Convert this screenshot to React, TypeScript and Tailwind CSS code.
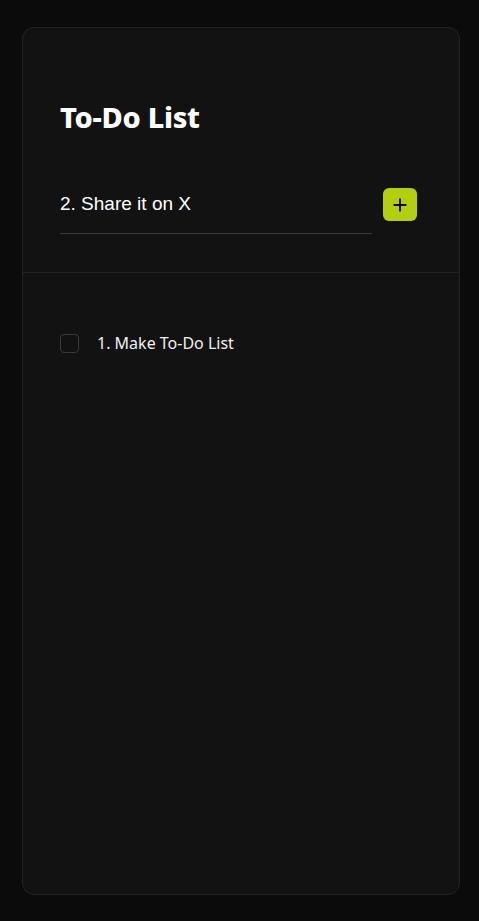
import React from "react";

export default function App() {
  return (
    <div className="min-h-screen bg-[#0b0b0b] pt-[27px] pl-[22px] pr-[19px] pb-[26px]">
      <div className="h-[868px] rounded-[12px] border border-[#232323] bg-[#121212] flex flex-col">
        <div className="pl-[37px] pr-[42px] pt-[72px] pb-[38px] border-b border-[#232323]">
          <h1 className="text-[29px] leading-[34px] font-extrabold text-white tracking-[-0.3px]" style={{ fontFamily: '"Noto Sans", sans-serif' }}>
            To-Do List
          </h1>
          <div className="mt-[54px] flex items-center gap-[11px]">
            <div className="flex-1 border-b border-[#3a3a3a] h-[46px] flex items-start pt-[4px]">
              <span className="text-[19px] text-white leading-[24px]" style={{ fontFamily: '"Liberation Sans", Arial, sans-serif' }}>
                2. Share it on X
              </span>
            </div>
            <button className="w-[34px] h-[33px] mb-[13px] rounded-[6px] bg-[#b4ce12] flex items-center justify-center">
              <svg width="16" height="16" viewBox="0 0 16 16" fill="none">
                <path d="M8 1.5V14.5M1.5 8H14.5" stroke="#111" strokeWidth="2" />
              </svg>
            </button>
          </div>
        </div>
        <div className="pl-[37px] pt-[60px]">
          <div className="flex items-center gap-[18px]">
            <div className="w-[19px] h-[19px] rounded-[4px] border border-[#3a3a3a]" />
            <span className="text-[16px] text-[#f0f0f0] leading-[20px]" style={{ fontFamily: '"Noto Sans", sans-serif' }}>
              1. Make To-Do List
            </span>
          </div>
        </div>
      </div>
    </div>
  );
}
